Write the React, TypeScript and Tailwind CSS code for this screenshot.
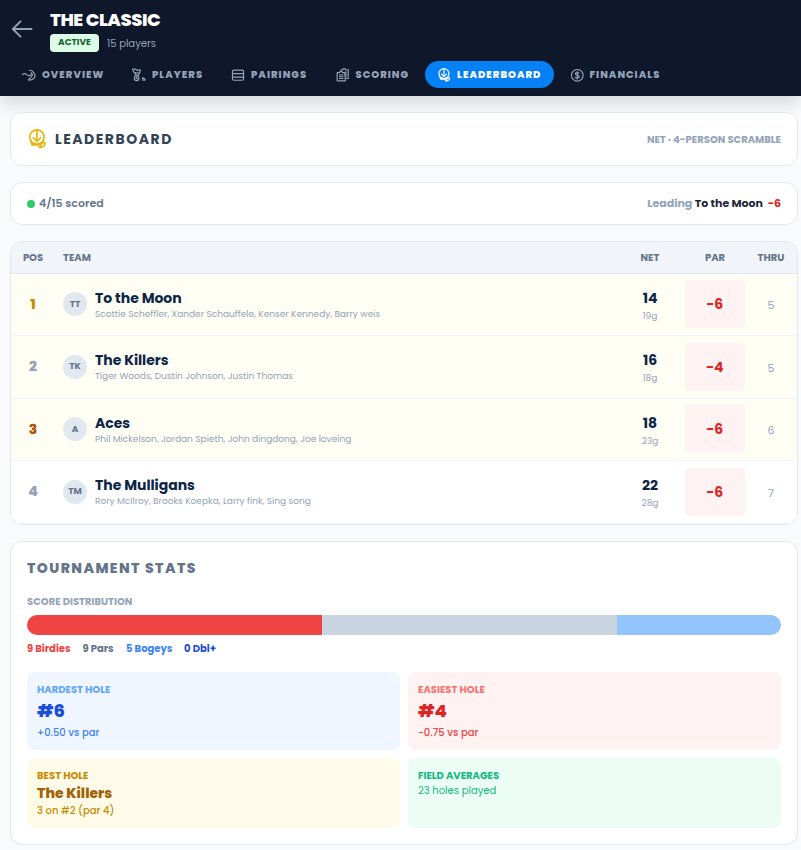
import type { ReactNode } from 'react';
import clsx from 'clsx';

interface Team {
  pos: number;
  posColor: string;
  initials: string;
  name: string;
  players: string;
  net: number;
  gross: string;
  par: string;
  thru: number;
}

const TEAMS: Team[] = [
  {
    pos: 1,
    posColor: 'text-[#ca8a04]',
    initials: 'TT',
    name: 'To the Moon',
    players: 'Scottie Scheffler, Xander Schauffele, Kenser Kennedy, Barry weis',
    net: 14,
    gross: '19g',
    par: '−6',
    thru: 5,
  },
  {
    pos: 2,
    posColor: 'text-[#94a3b8]',
    initials: 'TK',
    name: 'The Killers',
    players: 'Tiger Woods, Dustin Johnson, Justin Thomas',
    net: 16,
    gross: '18g',
    par: '−4',
    thru: 5,
  },
  {
    pos: 3,
    posColor: 'text-[#b45309]',
    initials: 'A',
    name: 'Aces',
    players: 'Phil Mickelson, Jordan Spieth, John dingdong, Joe loveing',
    net: 18,
    gross: '23g',
    par: '−6',
    thru: 6,
  },
  {
    pos: 4,
    posColor: 'text-[#94a3b8]',
    initials: 'TM',
    name: 'The Mulligans',
    players: 'Rory McIlroy, Brooks Koepka, Larry fink, Sing song',
    net: 22,
    gross: '28g',
    par: '−6',
    thru: 7,
  },
];

const SCORES = [
  { label: '9 Birdies', count: 9, bar: 'bg-[#ef4444]', text: 'text-[#ef4444] w-[55.5px]' },
  { label: '9 Pars', count: 9, bar: 'bg-[#cbd5e1]', text: 'text-[#64748b] w-[43.5px]' },
  { label: '5 Bogeys', count: 5, bar: 'bg-[#93c5fd]', text: 'text-[#3b82f6] w-[58px]' },
  { label: '0 Dbl+', count: 0, bar: 'bg-[#1d4ed8]', text: 'text-[#1d4ed8]' },
];

interface IconProps {
  className?: string;
  children: ReactNode;
}

function Icon({ className, children }: IconProps) {
  return (
    <svg
      viewBox="0 0 24 24"
      fill="none"
      stroke="currentColor"
      strokeWidth="2"
      strokeLinecap="round"
      strokeLinejoin="round"
      className={clsx('shrink-0', className)}
    >
      {children}
    </svg>
  );
}

function OverviewIcon() {
  return (
    <Icon className="size-3.5">
      <path d="M1 11.500c3-3 5-2 7 0s5 2 8 0" />
      <path d="M13 4c4-1 5 2 7 4 3 3 3 8 0 10-3 2.500-6 3-9 2.500" />
      <path d="M16 8l2 4-3 4-4 4" />
    </Icon>
  );
}

function PlayersIcon() {
  return (
    <Icon className="size-3.5">
      <path d="M1 2h5l3 2 5-1v4L9 9 3 7z" />
      <path d="M6 8l-1 3 5 2 3-4" />
      <circle cx="8" cy="17.5" r="4" />
      <path d="M7.500 16v2h2M18 17l4 1.500V21h-3z" />
    </Icon>
  );
}

function PairingsIcon() {
  return (
    <Icon className="size-3.5">
      <rect x="2.5" y="3.5" width="19" height="17.5" rx="2.5" />
      <path d="M3 9.500h18M3 15.500h18" />
    </Icon>
  );
}

function ScoringIcon() {
  return (
    <Icon className="size-3.5">
      <path d="M9 5V3h3c0-2.500 4-2.500 4 0h5v15h-4" />
      <path d="M2 8h4c0-3 5-3 5 0h4l1 14H2z" />
      <path d="M6 12h6M6 15h6M6 18h6M17 6v9" />
    </Icon>
  );
}

function LeaderboardIcon({ className }: { className: string }) {
  return (
    <Icon className={className}>
      <circle cx="11.9" cy="9.6" r="8.6" />
      <path d="M11.900 1.500v13M7.500 10.500l4.400 4.300 4.400-4.300" />
      <path d="M4.500 14l1.500 5h8.500M7 16.500l5 2 4-1.500" />
      <path d="M14.500 22c1.500-1 2-3.500 4-5 1-.8 2.500-1 3-.5.500 3-2 6-7 5.500z" />
    </Icon>
  );
}

function FinancialsIcon() {
  return (
    <Icon className="size-3.5">
      <circle cx="12.5" cy="12.5" r="10" />
      <path d="M15.500 9c-1-1.500-6.500-2-6.500 1s7 2 7 5-6 2.500-7 1M12.500 6v13" />
    </Icon>
  );
}

const TABS = [
  { label: 'OVERVIEW', icon: <OverviewIcon />, box: 'w-[94px]' },
  { label: 'PLAYERS', icon: <PlayersIcon />, box: 'w-[83px]' },
  { label: 'PAIRINGS', icon: <PairingsIcon />, box: 'w-[88.5px]' },
  { label: 'SCORING', icon: <ScoringIcon />, box: 'w-[85.5px]' },
];

function Header() {
  return (
    <header className="h-24 bg-[#0f172a] shadow-[0_8px_16px_rgba(0,0,0,0.13)]">
      <div className="flex h-[57px] pl-[11px]">
        <svg
          viewBox="0 0 22 18"
          fill="none"
          stroke="#94a3b8"
          strokeWidth="1.9"
          strokeLinecap="round"
          strokeLinejoin="round"
          className="mt-5 h-[18px] w-[22px]"
        >
          <path d="M20.500 9H1.800M9.500 1.300L1.800 9l7.700 7.700" />
        </svg>
        <div className="ml-[17px] pt-[9px]">
          <h1 className="text-[18px] leading-[22px] font-extrabold tracking-[-0.45px] text-white">THE CLASSIC</h1>
          <div className="mt-[3px] flex items-center gap-2">
            <span className="flex h-[18px] w-[49px] items-center justify-center rounded bg-[#dcfce7] pb-px text-[9px] font-bold text-[#166534]">
              ACTIVE
            </span>
            <span className="text-[10px] text-[#94a3b8]">15 players</span>
          </div>
        </div>
      </div>
      <nav className="flex h-[35px] items-center pl-[22px] text-[10px] font-extrabold tracking-[1px] whitespace-nowrap text-[#94a3b8]">
        {TABS.map((tab, i) => (
          <div key={tab.label} className={clsx('flex items-center gap-1.5', tab.box, i > 0 && 'ml-4')}>
            {tab.icon}
            {tab.label}
          </div>
        ))}
        <div className="ml-1 flex h-[27px] w-[129px] items-center gap-1.5 rounded-full bg-[#0580f5] pl-3 text-white">
          <LeaderboardIcon className="size-3.5" />
          LEADERBOARD
        </div>
        <div className="ml-[15.5px] flex items-center gap-1.5">
          <FinancialsIcon />
          FINANCIALS
        </div>
      </nav>
    </header>
  );
}

function Card({ className, children }: { className?: string; children: ReactNode }) {
  return <section className={clsx('rounded-xl border border-[#e2e8f0] bg-white', className)}>{children}</section>;
}

function TeamRow({ team }: { team: Team }) {
  return (
    <div
      className={clsx(
        'grid h-[62.5px] grid-cols-[44px_1fr_70px_60px_52px] items-center border-b border-[#f1f5f9] text-center',
        team.pos <= 3 ? 'bg-[#fffef5]' : 'bg-white'
      )}
    >
      <span className={clsx('text-[14px] font-extrabold', team.posColor)}>{team.pos}</span>
      <div className="flex items-center gap-2 pl-2 text-left">
        <span className="flex size-6 items-center justify-center rounded-full bg-[#e2e8f0] text-[9px] font-bold text-[#64748b]">
          {team.initials}
        </span>
        <div className="pt-px">
          <div className="text-[14px] leading-[18px] font-bold tracking-[-0.03px] text-[#0b2545]">{team.name}</div>
          <div className="text-[9px] leading-[14px] text-[#94a3b8]">{team.players}</div>
        </div>
      </div>
      <div className="pt-1">
        <div className="text-[14px] leading-[18px] font-bold text-[#0b2545]">{team.net}</div>
        <div className="mt-px text-[9px] leading-4 text-[#94a3b8]">{team.gross}</div>
      </div>
      <span className="flex h-12 items-center justify-center rounded-sm bg-[#fef2f2] pt-px text-[14px] font-bold tracking-[0.5px] text-[#dc2626]">
        {team.par}
      </span>
      <span className="pt-0.5 text-[11px] text-[#94a3b8]">{team.thru}</span>
    </div>
  );
}

function Leaderboard() {
  return (
    <Card className="h-[284px] overflow-hidden">
      <div className="grid h-[31.6px] grid-cols-[44px_1fr_70px_60px_52px] items-center border-b border-[#e2e8f0] bg-[#f1f5f9] text-center text-[10px] font-bold text-[#64748b]">
        <span>POS</span>
        <span className="pl-2 text-left">TEAM</span>
        <span>NET</span>
        <span>PAR</span>
        <span>THRU</span>
      </div>
      {TEAMS.map((team) => (
        <TeamRow key={team.pos} team={team} />
      ))}
    </Card>
  );
}

function Stats() {
  return (
    <Card className="h-[304px] px-4 pt-[17px]">
      <h2 className="text-[14px] leading-[18px] font-extrabold tracking-[1.4px] text-[#64748b]">TOURNAMENT STATS</h2>
      <h3 className="mt-[18px] text-[10px] leading-[14px] font-bold text-[#94a3b8]">SCORE DISTRIBUTION</h3>
      <div className="mt-[6px] flex h-5 overflow-hidden rounded-full">
        {SCORES.map((score) => (
          <div key={score.label} className={score.bar} style={{ width: `${(score.count / 23) * 100}%` }} />
        ))}
      </div>
      <div className="mt-[7px] flex text-[10px] leading-[14px] font-bold whitespace-nowrap">
        {SCORES.map((score) => (
          <span key={score.label} className={score.text}>
            {score.label}
          </span>
        ))}
      </div>
      <div className="mt-4 grid grid-cols-2 grid-rows-[78px_70px] gap-2 text-[10px] leading-[14px]">
        <div className="rounded-lg bg-[#eff6ff] px-2.5 pt-[11px]">
          <div className="font-bold text-[#60a5fa]">HARDEST HOLE</div>
          <div className="mt-[2px] text-[18px] leading-6 font-extrabold text-[#1d4ed8]">#6</div>
          <div className="mt-[3px] font-medium text-[#3b82f6]">+0.50 vs par</div>
        </div>
        <div className="rounded-lg bg-[#fef2f2] px-2.5 pt-[11px]">
          <div className="font-bold text-[#f87171]">EASIEST HOLE</div>
          <div className="mt-[2px] text-[18px] leading-6 font-extrabold text-[#dc2626]">#4</div>
          <div className="mt-[3px] font-medium text-[#ef4444]">−0.75 vs par</div>
        </div>
        <div className="rounded-lg bg-[#fefce8] px-2.5 pt-[11px]">
          <div className="font-bold text-[#ca8a04]">BEST HOLE</div>
          <div className="mt-px text-[14px] leading-[18px] font-extrabold text-[#a16207]">The Killers</div>
          <div className="mt-[2px] font-medium text-[#ca8a04]">3 on #2 (par 4)</div>
        </div>
        <div className="rounded-lg bg-[#ecfdf5] px-2.5 pt-[11px]">
          <div className="font-bold text-[#10b981]">FIELD AVERAGES</div>
          <div className="mt-px text-[#10b981]">23 holes played</div>
        </div>
      </div>
    </Card>
  );
}

export default function App() {
  return (
    <div className="h-[850px] overflow-hidden bg-[#f8fafc] font-['Poppins','Inter',sans-serif]">
      <Header />
      <main className="flex flex-col gap-4 pt-4 pr-[3px] pl-[10px]">
        <Card className="flex h-[54px] items-center justify-between px-4">
          <div className="flex items-center gap-2">
            <LeaderboardIcon className="size-5 text-[#eab308]" />
            <h2 className="text-[14px] font-bold tracking-[1.5px] text-[#334155]">LEADERBOARD</h2>
          </div>
          <span className="text-[10px] font-bold text-[#94a3b8]">NET · 4-PERSON SCRAMBLE</span>
        </Card>
        <Card className="flex h-[43px] items-center justify-between px-4 text-[11px] font-semibold">
          <div className="flex items-center gap-1 text-[#64748b]">
            <span className="size-2 rounded-full bg-[#33c96b]" />
            4/15 scored
          </div>
          <div className="font-bold text-[#94a3b8]">
            Leading <span className="text-[#1e293b]">To the Moon</span>
            <span className="ml-[5px] text-[#dc2626]">−6</span>
          </div>
        </Card>
        <Leaderboard />
        <Stats />
      </main>
    </div>
  );
}
